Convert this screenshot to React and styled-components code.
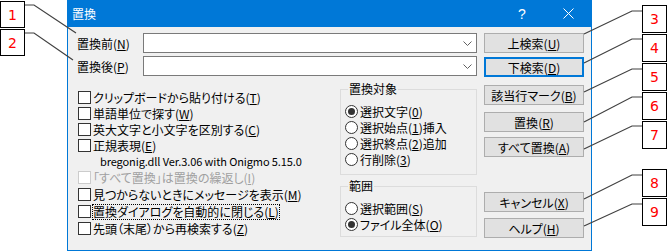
import React from 'react';
import styled, { createGlobalStyle } from 'styled-components';

const GlobalStyle = createGlobalStyle`
  html, body {
    margin: 0;
    padding: 0;
    background: #fff;
  }
  body {
    font-family: "Noto Sans CJK JP", "Noto Sans", sans-serif;
    font-feature-settings: "palt";
    color: #000;
  }
`;

const Page = styled.div`
  position: relative;
  width: 667px;
  height: 252px;
  overflow: hidden;
  background: #fff;
`;

const Dialog = styled.div`
  margin-left: 67px;
  width: 525px;
  height: 251px;
  box-sizing: border-box;
  border: 1px solid #0078d7;
  border-top: none;
  display: flex;
  flex-direction: column;
  background: #f0f0f0;
`;

const TitleBar = styled.div`
  height: 27px;
  flex: none;
  display: flex;
  align-items: center;
  background: #0078d7;
  color: #fff;
  font-size: 12px;
  padding-left: 4px;
`;

const Title = styled.div`
  flex: 1;
`;

const TitleButton = styled.div`
  width: 46px;
  height: 27px;
  display: flex;
  align-items: center;
  justify-content: center;
  font-family: "Liberation Sans", sans-serif;
  font-size: 14px;
`;

const Body = styled.div`
  flex: 1;
  display: flex;
  padding: 6px 0 0 9px;
`;

const Main = styled.div`
  width: 400px;
  margin-right: 7px;
  display: flex;
  flex-direction: column;
`;

const FieldRow = styled.div`
  display: flex;
  align-items: center;
  height: 20px;
  margin-top: ${p => p.$gap || 0}px;
`;

const FieldLabel = styled.div`
  width: 66px;
  font-size: 12px;
`;

const Combo = styled.div`
  flex: 1;
  height: 20px;
  box-sizing: border-box;
  border: 1px solid #7a7a7a;
  background: #fff;
  display: flex;
  align-items: center;
  justify-content: flex-end;
  padding-right: 4px;
`;

const Options = styled.div`
  display: flex;
  margin-top: 5px;
`;

const CheckColumn = styled.div`
  width: 265px;
  padding-top: 8px;
  display: flex;
  flex-direction: column;
`;

const CheckRow = styled.div`
  height: ${p => p.$h || 16}px;
  display: flex;
  align-items: center;
  font-size: 12px;
  color: ${p => (p.$disabled ? '#a0a0a0' : '#000')};
`;

const Box = styled.span`
  width: 13px;
  height: 13px;
  box-sizing: border-box;
  margin-left: 1px;
  margin-right: 2px;
  border: 1px solid ${p => (p.$disabled ? '#cccccc' : '#333')};
  background: #fff;
  flex: none;
`;

const FocusText = styled.span`
  outline: 1px dotted #000;
  outline-offset: 0;
  line-height: 14px;
`;

const Note = styled.div`
  height: 16px;
  display: flex;
  align-items: center;
  padding-left: 23px;
  font-size: 11px;
  letter-spacing: -0.1px;
`;

const GroupColumn = styled.div`
  display: flex;
  flex-direction: column;
`;

const Group = styled.fieldset`
  width: 137px;
  box-sizing: border-box;
  margin: ${p => p.$gap || 0}px 0 0 0;
  padding: 6px 0 ${p => p.$pb || 7}px 3px;
  border: 1px solid #dcdcdc;
  min-width: 0;
`;

const Legend = styled.legend`
  font-size: 12px;
  height: 16px;
  line-height: 16px;
  padding: 0 1px;
  margin-left: 4px;
`;

const RadioRow = styled.div`
  height: 16px;
  display: flex;
  align-items: center;
  font-size: 12px;
`;

const Radio = styled.span`
  width: 13px;
  height: 13px;
  box-sizing: border-box;
  margin-left: 1px;
  margin-right: 2px;
  border-radius: 50%;
  border: 1px solid #333;
  background: #fff;
  flex: none;
  display: flex;
  align-items: center;
  justify-content: center;

  &::after {
    content: '';
    width: 7px;
    height: 7px;
    border-radius: 50%;
    background: #333;
    display: ${p => (p.$on ? 'block' : 'none')};
  }
`;

const ButtonColumn = styled.div`
  width: 100px;
  display: flex;
  flex-direction: column;
`;

const Button = styled.div`
  height: 20px;
  box-sizing: border-box;
  margin-top: ${p => p.$gap || 0}px;
  border: ${p => (p.$default ? '2px solid #0078d7' : '1px solid #adadad')};
  background: #e1e1e1;
  display: flex;
  align-items: center;
  justify-content: center;
  font-size: 12px;
`;

const Lines = styled.svg`
  position: absolute;
  left: 0;
  top: 0;
  pointer-events: none;
`;

const Callout = styled.div`
  position: absolute;
  left: ${p => p.$x}px;
  top: ${p => p.$y}px;
  width: 25px;
  height: ${p => p.$h || 28}px;
  box-sizing: border-box;
  border: 1px solid #000;
  background: #fff;
  color: #f00;
  font-family: "DejaVu Sans", sans-serif;
  font-size: 14px;
  display: flex;
  align-items: center;
  justify-content: center;
`;

const Chevron = () => (
  <svg width="9" height="5" viewBox="0 0 9 5">
    <polyline points="0.5,0.5 4.5,4.5 8.5,0.5" fill="none" stroke="#606060" strokeWidth="1" />
  </svg>
);

const CloseIcon = () => (
  <svg width="11" height="11" viewBox="0 0 11 11">
    <path d="M0.5 0.5 L10.5 10.5 M10.5 0.5 L0.5 10.5" stroke="#fff" strokeWidth="1" />
  </svg>
);

const Key = ({ k }) => (
  <>
    (<u>{k}</u>)
  </>
);

const checks1 = [
  ['クリップボードから貼り付ける', 'T'],
  ['単語単位で探す', 'W'],
  ['英大文字と小文字を区別する', 'C'],
  ['正規表現', 'E'],
];

const targets = [
  ['選択文字', '0', '', true],
  ['選択始点', '1', '挿入', false],
  ['選択終点', '2', '追加', false],
  ['行削除', '3', '', false],
];

const buttons = [
  ['上検索', 'U', 0],
  ['下検索', 'D', 4, true],
  ['該当行マーク', 'B', 8],
  ['置換', 'R', 7],
  ['すべて置換', 'A', 5],
  ['キャンセル', 'X', 35],
  ['ヘルプ', 'H', 6],
];

const callouts = [
  { n: 1, x: 0, y: 1, h: 27, line: '24,5 34,5 76,33' },
  { n: 2, x: 0, y: 29, h: 27, line: '24,33 34,33 73,60' },
  { n: 3, x: 642, y: 5, line: '642,11 632,11 584,34' },
  { n: 4, x: 642, y: 34, line: '642,39 632,39 584,63' },
  { n: 5, x: 642, y: 63, line: '642,69 632,69 584,92' },
  { n: 6, x: 642, y: 92, line: '642,97 632,97 584,122' },
  { n: 7, x: 642, y: 121, line: '642,126 632,126 584,149' },
  { n: 8, x: 642, y: 169, line: '642,175 632,175 584,199' },
  { n: 9, x: 642, y: 198, line: '642,204 632,204 584,226' },
];

export default function App() {
  return (
    <Page>
      <GlobalStyle />
      <Dialog>
        <TitleBar>
          <Title>置換</Title>
          <TitleButton>?</TitleButton>
          <TitleButton>
            <CloseIcon />
          </TitleButton>
        </TitleBar>
        <Body>
          <Main>
            <FieldRow>
              <FieldLabel>置換前<Key k="N" /></FieldLabel>
              <Combo><Chevron /></Combo>
            </FieldRow>
            <FieldRow $gap={3}>
              <FieldLabel>置換後<Key k="P" /></FieldLabel>
              <Combo><Chevron /></Combo>
            </FieldRow>
            <Options>
              <CheckColumn>
                {checks1.map(([t, k]) => (
                  <CheckRow key={k}>
                    <Box />
                    {t}<Key k={k} />
                  </CheckRow>
                ))}
                <Note>bregonig.dll Ver.3.06 with Onigmo 5.15.0</Note>
                <CheckRow $h={17} $disabled>
                  <Box $disabled />
                  「すべて置換」は置換の繰返し<Key k="I" />
                </CheckRow>
                <CheckRow $h={17}>
                  <Box />
                  見つからないときにメッセージを表示<Key k="M" />
                </CheckRow>
                <CheckRow $h={17}>
                  <Box />
                  <FocusText>置換ダイアログを自動的に閉じる<Key k="L" /></FocusText>
                </CheckRow>
                <CheckRow $h={17}>
                  <Box />
                  先頭（末尾）から再検索する<Key k="Z" />
                </CheckRow>
              </CheckColumn>
              <GroupColumn>
                <Group>
                  <Legend>置換対象</Legend>
                  {targets.map(([t, k, tail, on]) => (
                    <RadioRow key={k}>
                      <Radio $on={on} />
                      {t}<Key k={k} />{tail}
                    </RadioRow>
                  ))}
                </Group>
                <Group $gap={3} $pb={4}>
                  <Legend>範囲</Legend>
                  <RadioRow>
                    <Radio />
                    選択範囲<Key k="S" />
                  </RadioRow>
                  <RadioRow>
                    <Radio $on />
                    ファイル全体<Key k="O" />
                  </RadioRow>
                </Group>
              </GroupColumn>
            </Options>
          </Main>
          <ButtonColumn>
            {buttons.map(([t, k, gap, def]) => (
              <Button key={k} $gap={gap} $default={def}>
                {t}<Key k={k} />
              </Button>
            ))}
          </ButtonColumn>
        </Body>
      </Dialog>
      <Lines width="667" height="252">
        {callouts.map(c => (
          <polyline key={c.n} points={c.line} fill="none" stroke="#404040" strokeWidth="1.2" />
        ))}
      </Lines>
      {callouts.map(c => (
        <Callout key={c.n} $x={c.x} $y={c.y} $h={c.h}>{c.n}</Callout>
      ))}
    </Page>
  );
}
